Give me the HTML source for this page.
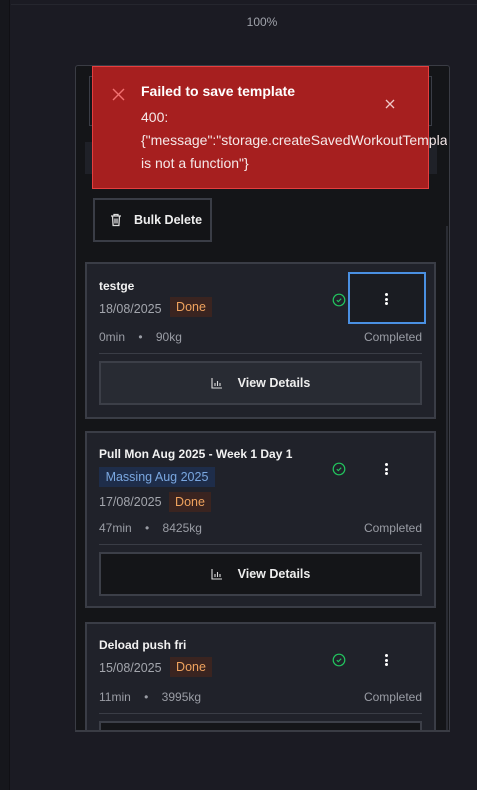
<!DOCTYPE html>
<html><head><meta charset="utf-8"><style>
*{box-sizing:border-box;margin:0;padding:0}
body{width:477px;height:790px;background:#1b1b23;font-family:"Liberation Sans",sans-serif;position:relative;overflow:hidden;color:#fff}
.a{position:absolute}
.card{position:absolute;left:85px;width:351px;background:#20222a;border:2px solid #3a3d46}
.t{position:absolute;left:12px;font-weight:bold;font-size:12px;color:#f2f2f2}
.d{position:absolute;left:12px;font-size:12.5px;color:#a3a6ad}
.done{position:absolute;width:42px;height:20px;background:#3a2420;color:#f0a35e;font-size:12.5px;line-height:20px;text-align:center}
.meta{position:absolute;left:12px;right:12px;font-size:12px;color:#9a9da5}
.meta .r{position:absolute;right:0;top:0}
.div{position:absolute;left:12px;right:12px;height:1px;background:#3a3d46}
.btn{position:absolute;left:12px;right:12px;height:44px;border:2px solid #3c3f48;font-size:12.5px;font-weight:bold;color:#eee;display:flex;align-items:center;justify-content:center}
.btn svg{margin-right:15px}
.chk{position:absolute;left:245px}
.dots{position:absolute;width:3px}
.dots i{display:block;width:3px;height:3px;background:#fff;border-radius:50%;margin-bottom:1.5px}
</style></head><body>
<div class="a" style="left:0;top:0;width:10px;height:790px;background:#16171c;border-right:1px solid #101014"></div>
<div class="a" style="left:11px;top:4px;width:466px;height:1px;background:#25262e"></div>
<div class="a" style="left:0;width:477px;top:15px;text-align:center;padding-left:47px;font-size:12px;color:#a0a3ab">100%</div>

<div class="a" style="left:75px;top:65px;width:375px;height:667px;background:#141518;border:1px solid #3a3c44;border-radius:3px;overflow:hidden">
<div class="a" style="left:13px;top:10px;width:343px;height:50px;border:1px solid #3a3d46"></div>
<div class="a" style="left:9px;top:76px;width:352px;height:32px;background:#1f2128"></div>
<div class="a" style="right:1px;top:160px;width:2px;height:510px;background:#2a2c33"></div>

<div class="a" style="left:17px;top:132px;width:119px;height:44px;border:2px solid #3a3d46;background:#131417;font-size:12.5px;font-weight:bold;color:#eee;display:flex;align-items:center;padding-left:15px">
<svg width="12" height="14" viewBox="0 0 12 14" style="margin-right:12px"><path d="M1 3h10M4 3V1.5h4V3M2.5 3l.6 9.5h5.8l.6-9.5M5 5.5v5M7 5.5v5" stroke="#ddd" stroke-width="1.3" fill="none"/></svg>Bulk Delete</div>
</div>

<div class="a" style="left:92px;top:66px;width:337px;height:123px;background:#a61f1f;border:1px solid #e53e3e"></div>
<svg class="a" style="left:112px;top:88px" width="13" height="13" viewBox="0 0 13 13"><path d="M1 1l11 11M12 1L1 12" stroke="#f27272" stroke-width="1.4"/></svg>
<svg class="a" style="left:385px;top:99px" width="10" height="10" viewBox="0 0 10 10"><path d="M1 1l8 8M9 1L1 9" stroke="#f1c9c9" stroke-width="1.3"/></svg>
<div class="a" style="left:141px;top:83px;font-size:14px;font-weight:bold;color:#fff">Failed to save template</div>
<div class="a" style="left:141px;top:106px;font-size:14px;line-height:23px;color:#f5e8e8;white-space:nowrap;width:306px;overflow:hidden">400:<br>{"message":"storage.createSavedWorkoutTemplate<br>is not a function"}</div>

<!-- card 1 -->
<div class="card" style="top:262px;height:157px">
<div class="t" style="top:15px">testge</div>
<div class="d" style="top:38px">18/08/2025</div>
<div class="done" style="left:83px;top:33px">Done</div>
<svg class="chk" style="top:29px" width="14" height="14" viewBox="0 0 14 14"><circle cx="7" cy="7" r="5.8" stroke="#22c55e" stroke-width="1.2" fill="none"/><path d="M4.8 7.2l1.5 1.4 2.9-2.9" stroke="#22c55e" stroke-width="1.1" fill="none"/></svg>
<div class="a" style="left:261px;top:8px;width:78px;height:52px;border:2px solid #4a90e2;background:#1a1c22"></div>
<div class="dots" style="left:298px;top:29px"><i></i><i></i><i></i></div>
<div class="meta" style="top:66px">0min &nbsp;&nbsp; • &nbsp;&nbsp; 90kg<span class="r">Completed</span></div>
<div class="div" style="top:89px"></div>
<div class="btn" style="top:97px;background:#282b33"><svg width="12" height="12" viewBox="0 0 12 12"><path d="M1 1v10h10M4 9V6M6.5 9V4M9 9V6" stroke="#ddd" stroke-width="1.1" fill="none"/></svg>View Details</div>
</div>

<!-- card 2 -->
<div class="card" style="top:431px;height:177px">
<div class="t" style="top:14px">Pull Mon Aug 2025 - Week 1 Day 1</div>
<div class="a" style="left:12px;top:34px;width:116px;height:20px;background:#1e2d4a;color:#7aa7e0;font-size:12.5px;line-height:20px;text-align:center">Massing Aug 2025</div>
<div class="d" style="top:62px">17/08/2025</div>
<div class="done" style="left:82px;top:59px">Done</div>
<svg class="chk" style="top:29px" width="14" height="14" viewBox="0 0 14 14"><circle cx="7" cy="7" r="5.8" stroke="#22c55e" stroke-width="1.2" fill="none"/><path d="M4.8 7.2l1.5 1.4 2.9-2.9" stroke="#22c55e" stroke-width="1.1" fill="none"/></svg>
<div class="dots" style="left:298px;top:30px"><i></i><i></i><i></i></div>
<div class="meta" style="top:88px">47min &nbsp;&nbsp; • &nbsp;&nbsp; 8425kg<span class="r">Completed</span></div>
<div class="div" style="top:111px"></div>
<div class="btn" style="top:119px;background:#141518"><svg width="12" height="12" viewBox="0 0 12 12"><path d="M1 1v10h10M4 9V6M6.5 9V4M9 9V6" stroke="#ddd" stroke-width="1.1" fill="none"/></svg>View Details</div>
</div>

<!-- card 3 -->
<div class="card" style="top:622px;height:109px;border-bottom:none;overflow:hidden">
<div class="t" style="top:14px">Deload push fri</div>
<div class="d" style="top:37px">15/08/2025</div>
<div class="done" style="left:83px;top:33px">Done</div>
<svg class="chk" style="top:29px" width="14" height="14" viewBox="0 0 14 14"><circle cx="7" cy="7" r="5.8" stroke="#22c55e" stroke-width="1.2" fill="none"/><path d="M4.8 7.2l1.5 1.4 2.9-2.9" stroke="#22c55e" stroke-width="1.1" fill="none"/></svg>
<div class="dots" style="left:298px;top:30px"><i></i><i></i><i></i></div>
<div class="meta" style="top:66px">11min &nbsp;&nbsp; • &nbsp;&nbsp; 3995kg<span class="r">Completed</span></div>
<div class="div" style="top:89px"></div>
<div class="btn" style="top:97px;background:#141518"></div>
</div>
<div class="a" style="left:75px;top:730px;width:375px;height:2px;background:#3a3c44"></div>
</body></html>
